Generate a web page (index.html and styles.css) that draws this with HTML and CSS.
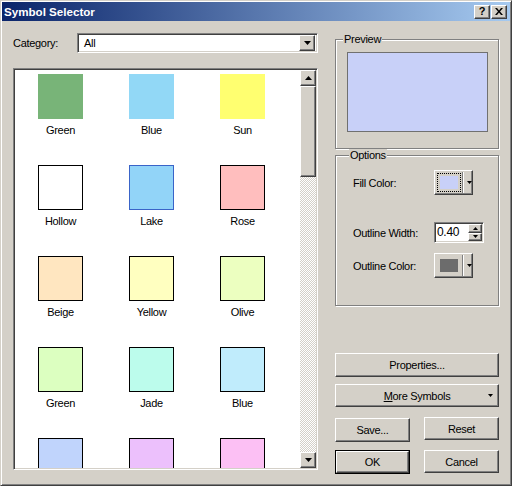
FILE: index.html
```html
<!DOCTYPE html>
<html>
<head>
<meta charset="utf-8">
<link rel="stylesheet" href="styles.css">
</head>
<body>
<div class="window">
  <div class="titlebar">
    <span class="title">Symbol Selector</span>
    <div class="tbtns">
      <span class="tbtn help">?</span>
      <span class="tbtn close"><svg width="8" height="7" viewBox="0 0 8 7"><path d="M0 0h2l2 2.5L6 0h2L5 3.5 8 7H6L4 4.5 2 7H0l3-3.5z" fill="#000"/></svg></span>
    </div>
  </div>
  <div class="content">
    <div class="left">
      <div class="cat-row">
        <span class="cat-label">Category:</span>
        <div class="combo">
          <span class="combo-text">All</span>
          <span class="rbtn drop"><svg width="7" height="4" viewBox="0 0 7 4"><path d="M0 0h7L3.5 4z" fill="#000"/></svg></span>
        </div>
      </div>
      <div class="list">
        <div class="grid">
          <div class="item"><div class="sw" style="background:#78b478;border-color:#78b478"></div><span class="lbl">Green</span></div>
          <div class="item"><div class="sw" style="background:#92d8f6;border-color:#92d8f6"></div><span class="lbl">Blue</span></div>
          <div class="item"><div class="sw" style="background:#ffff70;border-color:#ffff70"></div><span class="lbl">Sun</span></div>
          <div class="item"><div class="sw" style="background:#ffffff"></div><span class="lbl">Hollow</span></div>
          <div class="item"><div class="sw" style="background:#92d4f8;border-color:#3a64c8"></div><span class="lbl">Lake</span></div>
          <div class="item"><div class="sw" style="background:#ffbebe"></div><span class="lbl">Rose</span></div>
          <div class="item"><div class="sw" style="background:#ffe6c0"></div><span class="lbl">Beige</span></div>
          <div class="item"><div class="sw" style="background:#ffffc0"></div><span class="lbl">Yellow</span></div>
          <div class="item"><div class="sw" style="background:#ecffc0"></div><span class="lbl">Olive</span></div>
          <div class="item"><div class="sw" style="background:#dcffc0"></div><span class="lbl">Green</span></div>
          <div class="item"><div class="sw" style="background:#bcfcec"></div><span class="lbl">Jade</span></div>
          <div class="item"><div class="sw" style="background:#c0ecfc"></div><span class="lbl">Blue</span></div>
          <div class="item"><div class="sw" style="background:#c0d4fc"></div></div>
          <div class="item"><div class="sw" style="background:#ecc0fc"></div></div>
          <div class="item"><div class="sw" style="background:#fcc0f4"></div></div>
        </div>
        <div class="vscroll">
          <span class="rbtn sbtn"><svg width="7" height="4" viewBox="0 0 7 4"><path d="M3.5 0L7 4H0z" fill="#000"/></svg></span>
          <div class="rbtn thumb"></div>
          <div class="track"></div>
          <span class="rbtn sbtn"><svg width="7" height="4" viewBox="0 0 7 4"><path d="M0 0h7L3.5 4z" fill="#000"/></svg></span>
        </div>
      </div>
    </div>
    <div class="right">
      <fieldset class="group preview-group">
        <legend>Preview</legend>
        <div class="preview"></div>
      </fieldset>
      <fieldset class="group options-group">
        <legend>Options</legend>
        <div class="opt-row r1">
          <span class="opt-label">Fill Color:</span>
          <div class="rbtn colorbtn">
            <span class="focus"><span class="cswatch fill"></span></span>
            <span class="sep"></span>
            <svg width="5" height="3" viewBox="0 0 5 3"><path d="M0 0h5L2.5 3z" fill="#000"/></svg>
          </div>
        </div>
        <div class="opt-row r2">
          <span class="opt-label">Outline Width:</span>
          <div class="spin">
            <span class="spin-text">0.40</span>
            <div class="spin-btns">
              <span class="rbtn sp"><svg width="5" height="3" viewBox="0 0 5 3"><path d="M2.5 0L5 3H0z" fill="#000"/></svg></span>
              <span class="rbtn sp"><svg width="5" height="3" viewBox="0 0 5 3"><path d="M0 0h5L2.5 3z" fill="#000"/></svg></span>
            </div>
          </div>
        </div>
        <div class="opt-row r3">
          <span class="opt-label">Outline Color:</span>
          <div class="rbtn colorbtn">
            <span class="nofocus"><span class="cswatch outline"></span></span>
            <span class="sep"></span>
            <svg width="5" height="3" viewBox="0 0 5 3"><path d="M0 0h5L2.5 3z" fill="#000"/></svg>
          </div>
        </div>
      </fieldset>
      <div class="rbtn btn wide props">Properties...</div>
      <div class="rbtn btn wide more"><span><u>M</u>ore Symbols</span><svg class="more-arrow" width="5" height="3" viewBox="0 0 5 3"><path d="M0 0h5L2.5 3z" fill="#000"/></svg></div>
      <div class="btn-row first">
        <div class="rbtn btn save">Save...</div>
        <div class="rbtn btn">Reset</div>
      </div>
      <div class="btn-row">
        <div class="default"><div class="rbtn btn inner">OK</div></div>
        <div class="rbtn btn">Cancel</div>
      </div>
    </div>
  </div>
</div>
</body>
</html>
```

FILE: styles.css
```css
* { box-sizing: border-box; }
html, body { margin: 0; padding: 0; }
body {
  background: #d4d0c8;
  font-family: "Liberation Sans", Arial, sans-serif;
  font-size: 11px;
  letter-spacing: -0.3px;
  color: #000;
}
.window {
  width: 512px;
  height: 486px;
  padding: 1px;
  border: 1px solid;
  border-color: #d4d0c8 #404040 #404040 #d4d0c8;
  box-shadow: inset 1px 1px #fff, inset -1px -1px #808080;
  background: #d4d0c8;
  overflow: hidden;
}
.titlebar {
  height: 19px;
  display: flex;
  align-items: center;
  justify-content: space-between;
  padding: 0 3px 0 2px;
  background: linear-gradient(to right, #0a246a, #a6caf0);
}
.title {
  color: #fff;
  font-weight: bold;
  font-size: 11.6px;
  letter-spacing: 0;
}
.tbtns { display: flex; gap: 1px; }
.tbtn {
  width: 16px;
  height: 14px;
  display: flex;
  align-items: center;
  justify-content: center;
  background: #d4d0c8;
  border: 1px solid;
  border-color: #fff #404040 #404040 #fff;
  box-shadow: inset -1px -1px #808080;
  font-weight: bold;
  font-size: 11px;
  letter-spacing: 0;
  line-height: 1;
}
.content {
  display: flex;
  padding: 12px 11px 0 11px;
}
.left { width: 305px; }
.right { width: 164px; margin-left: 17px; }

.rbtn {
  background: #d4d0c8;
  border: 1px solid;
  border-color: #fff #404040 #404040 #fff;
  box-shadow: inset -1px -1px #808080, inset 1px 1px #d4d0c8;
}
.cat-row { display: flex; align-items: center; height: 20px; }
.cat-label { width: 64px; }
.combo {
  width: 241px;
  height: 20px;
  background: #fff;
  border: 1px solid;
  border-color: #808080 #fff #fff #808080;
  box-shadow: inset 1px 1px #404040, inset -1px -1px #d4d0c8;
  display: flex;
  align-items: center;
  justify-content: space-between;
  padding: 2px;
}
.combo-text { padding-left: 4px; }
.drop {
  width: 16px;
  height: 16px;
  display: flex;
  align-items: center;
  justify-content: center;
}
.list {
  margin-top: 15px;
  height: 402px;
  display: flex;
  background: #fff;
  border: 1px solid;
  border-color: #808080 #fff #fff #808080;
  box-shadow: inset 1px 1px #404040, inset -1px -1px #d4d0c8;
  padding: 1px;
  overflow: hidden;
}
.grid {
  flex: 1;
  display: grid;
  grid-template-columns: repeat(3, 91px);
  grid-auto-rows: 91px;
  padding-top: 4px;
  overflow: hidden;
}
.item { display: flex; flex-direction: column; align-items: center; }
.sw { width: 45px; height: 45px; border: 1px solid #000; flex: none; }
.lbl { margin-top: 5px; line-height: 13px; }
.vscroll {
  width: 16px;
  display: flex;
  flex-direction: column;
  background: repeating-conic-gradient(#d4d0c8 0 25%, #fff 0 50%) 0 0 / 2px 2px;
}
.sbtn {
  height: 16px;
  display: flex;
  align-items: center;
  justify-content: center;
  flex: none;
}
.thumb { height: 91px; flex: none; }
.track { flex: 1; }

fieldset.group {
  margin: 0;
  min-width: 0;
  border: 1px solid #808080;
  box-shadow: inset 1px 1px #fff, 1px 1px #fff;
}
fieldset.group legend {
  margin-left: -4px;
  padding: 0 1px;
  line-height: 13px;
  background: #d4d0c8;
}
.preview-group { padding: 6px 10px 16px 11px; }
.preview {
  height: 80px;
  background: #c8d0f8;
  border: 1px solid #707070;
}
.options-group { margin-top: 7px; padding: 8px 10px 27px 17px; }
.opt-row { display: flex; align-items: center; }
.r1, .r3 { height: 25px; }
.r2 { height: 21px; margin-top: 27px; }
.r3 { margin-top: 10px; }
.opt-label { width: 81px; }
.colorbtn {
  width: 39px;
  height: 25px;
  display: flex;
  align-items: center;
  padding: 2px 0 2px 2px;
}
.focus, .nofocus {
  width: 24px;
  height: 19px;
  padding: 2px;
  display: flex;
}
.focus { border: 1px dotted #000; }
.nofocus { border: 1px solid transparent; }
.cswatch { flex: 1; }
.fill { background: #c8d0f8; }
.outline { background: #6c6c6c; }
.sep {
  width: 2px;
  height: 21px;
  margin: 0 3px 0 1px;
  border-left: 1px solid #808080;
  border-right: 1px solid #fff;
}
.spin {
  width: 50px;
  height: 21px;
  display: flex;
  background: #fff;
  border: 1px solid;
  border-color: #808080 #fff #fff #808080;
  box-shadow: inset 1px 1px #404040, inset -1px -1px #d4d0c8;
  padding: 1px;
  align-items: stretch;
}
.spin-text { flex: 1; padding-left: 1px; font-size: 12px; line-height: 17px; }
.spin-btns { width: 14px; display: flex; flex-direction: column; }
.sp { flex: 1; display: flex; align-items: center; justify-content: center; }

.btn {
  height: 23px;
  display: flex;
  align-items: center;
  justify-content: center;
}
.wide { width: 164px; }
.props { margin-top: 47px; height: 24px; }
.more { margin-top: 7px; position: relative; }
.more-arrow { position: absolute; right: 5px; top: 9px; }
.btn-row { display: flex; justify-content: space-between; margin-top: 8px; }
.btn-row.first { margin-top: 10px; }
.btn-row .btn { width: 75px; }
.save { height: 24px; margin-top: 1px; }
.default { width: 75px; height: 24px; border: 1px solid #000; display: flex; }
.default .inner { width: auto; flex: 1; height: auto; }
```
